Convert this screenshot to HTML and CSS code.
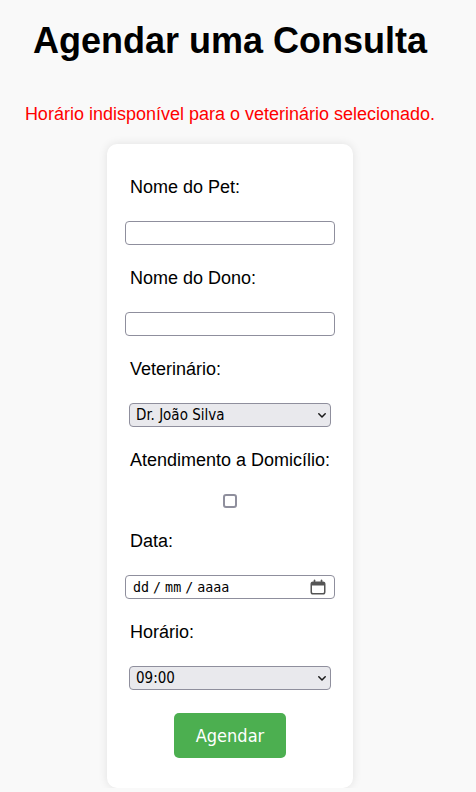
FILE: index.html
```html
<!DOCTYPE html>
<html lang="pt-BR">
<head>
<meta charset="utf-8">
<title>Agendar uma Consulta</title>
<link rel="stylesheet" href="styles.css">
</head>
<body>
<div class="page">
  <h1 class="title">Agendar uma Consulta</h1>
  <p class="error">Horário indisponível para o veterinário selecionado.</p>
  <form class="card">
    <label class="label" for="pet">Nome do Pet:</label>
    <input class="text-input" id="pet" type="text">
    <label class="label" for="dono">Nome do Dono:</label>
    <input class="text-input" id="dono" type="text">
    <label class="label" for="vet">Veterinário:</label>
    <div class="select-wrap">
      <select class="select" id="vet">
        <option>Dr. João Silva</option>
      </select>
      <svg class="chevron" width="8" height="5" viewBox="0 0 8 5"><polyline points="0.8,0.8 4,4 7.2,0.8" fill="none" stroke="#1a1a1a" stroke-width="1.5" stroke-linecap="round" stroke-linejoin="round"/></svg>
    </div>
    <label class="label" for="dom">Atendimento a Domicílio:</label>
    <input class="checkbox" id="dom" type="checkbox">
    <label class="label" for="data">Data:</label>
    <div class="date-input" id="data">
      <span class="date-text">dd / mm / aaaa</span>
      <svg class="calendar" width="16" height="16" viewBox="0 0 16 16">
        <rect x="1.25" y="3.25" width="13.5" height="11.5" rx="1.8" fill="none" stroke="#555" stroke-width="1.5"/>
        <rect x="1.25" y="3.25" width="13.5" height="3.2" rx="1" fill="#555"/>
        <line x1="4.5" y1="1.2" x2="4.5" y2="4" stroke="#555" stroke-width="1.5" stroke-linecap="round"/>
        <line x1="11.5" y1="1.2" x2="11.5" y2="4" stroke="#555" stroke-width="1.5" stroke-linecap="round"/>
      </svg>
    </div>
    <label class="label" for="hora">Horário:</label>
    <div class="select-wrap">
      <select class="select" id="hora">
        <option>09:00</option>
      </select>
      <svg class="chevron" width="8" height="5" viewBox="0 0 8 5"><polyline points="0.8,0.8 4,4 7.2,0.8" fill="none" stroke="#1a1a1a" stroke-width="1.5" stroke-linecap="round" stroke-linejoin="round"/></svg>
    </div>
    <button class="submit" type="button">Agendar</button>
  </form>
</div>
</body>
</html>
```
FILE: styles.css
```css
html, body {
  margin: 0;
  padding: 0;
}

body {
  background: #f9f9f9;
  font-family: "Liberation Sans", Arial, sans-serif;
  color: #000;
}

.page {
  width: 460px;
  display: flex;
  flex-direction: column;
  align-items: center;
}

.title {
  margin: 20px 0 0;
  font-size: 36px;
  font-weight: bold;
  line-height: normal;
}

.error {
  margin: 42px 0 0;
  color: #ff0000;
  font-size: 18px;
  line-height: normal;
}

.card {
  margin-top: 19px;
  width: 246px;
  box-sizing: border-box;
  background: #fff;
  border-radius: 10px;
  box-shadow: 0 0 10px rgba(0, 0, 0, 0.1);
  padding: 33px 18px 30px;
  display: flex;
  flex-direction: column;
  gap: 23px;
}

.label {
  font-size: 18px;
  line-height: normal;
  margin-left: 5px;
}

.text-input {
  margin: 0;
  width: 210px;
  height: 24px;
  box-sizing: border-box;
  border: 1px solid #8f8f9d;
  border-radius: 4px;
  background: #fff;
  padding: 1px 4px;
  font-size: 13px;
}

.select-wrap {
  position: relative;
  align-self: center;
  width: 202px;
  height: 24px;
}

.select {
  appearance: none;
  -webkit-appearance: none;
  margin: 0;
  width: 100%;
  height: 100%;
  box-sizing: border-box;
  border: 1px solid #8f8f9d;
  border-radius: 4px;
  background: #e9e9ed;
  color: #000;
  padding: 0 20px 0 6px;
  font-family: "DejaVu Sans", Verdana, sans-serif;
  font-stretch: condensed;
  font-size: 15px;
}

.chevron {
  position: absolute;
  right: 5px;
  top: 10px;
  pointer-events: none;
}

.checkbox {
  appearance: none;
  -webkit-appearance: none;
  align-self: center;
  margin: 0;
  width: 14px;
  height: 14px;
  box-sizing: border-box;
  border: 2px solid #8f8f9d;
  border-radius: 3px;
  background: #fff;
}

.date-input {
  width: 210px;
  height: 24px;
  box-sizing: border-box;
  border: 1px solid #8f8f9d;
  border-radius: 4px;
  background: #fff;
  display: flex;
  align-items: center;
  justify-content: space-between;
  padding: 0 8px 0 7px;
}

.date-text {
  font-family: "DejaVu Sans Mono", "Liberation Mono", monospace;
  font-size: 13.33px;
  word-spacing: -4px;
  color: #000;
}

.calendar {
  display: block;
}

.submit {
  align-self: center;
  width: 112px;
  height: 45px;
  border: none;
  border-radius: 5px;
  background: #4caf50;
  color: #fff;
  font-family: "DejaVu Sans", Verdana, sans-serif;
  font-stretch: condensed;
  font-size: 18px;
  padding: 0;
}
```
